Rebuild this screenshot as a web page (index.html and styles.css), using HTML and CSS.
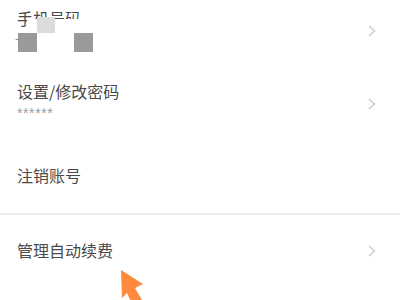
FILE: index.html
```html
<!DOCTYPE html>
<html lang="zh">
<head>
<meta charset="utf-8">
<link rel="stylesheet" href="styles.css">
</head>
<body>
<div class="list">
  <div class="row">
    <div class="text">
      <div class="title">手机号码</div>
      <div class="sub phone">+</div>
    </div>
    <svg class="chev" width="8" height="12" viewBox="0 0 8 12"><polyline points="1,1 6.5,6 1,11" fill="none" stroke="#cfcfcf" stroke-width="1.6"/></svg>
    <div class="mask"></div>
    <div class="sq sq-light"></div>
    <div class="sq sq-dark sq-a"></div>
    <div class="sq sq-dark sq-b"></div>
  </div>
  <div class="row">
    <div class="text">
      <div class="title">设置/修改密码</div>
      <div class="sub">******</div>
    </div>
    <svg class="chev" width="8" height="12" viewBox="0 0 8 12"><polyline points="1,1 6.5,6 1,11" fill="none" stroke="#cfcfcf" stroke-width="1.6"/></svg>
  </div>
  <div class="row">
    <div class="text single">
      <div class="title">注销账号</div>
    </div>
  </div>
  <div class="divider"></div>
  <div class="row last">
    <div class="text single">
      <div class="title">管理自动续费</div>
    </div>
    <svg class="chev" width="8" height="12" viewBox="0 0 8 12"><polyline points="1,1 6.5,6 1,11" fill="none" stroke="#cfcfcf" stroke-width="1.6"/></svg>
  </div>
</div>
<svg class="cursor" width="400" height="300" viewBox="0 0 400 300"><polygon points="121,270 143,284 135,288 143,302 132,304 127,293 122,298" fill="#ff8a3d"/></svg>
</body>
</html>
```
FILE: styles.css
```css
html, body {
  margin: 0;
  padding: 0;
  background: #fff;
  width: 400px;
  height: 300px;
  overflow: hidden;
  font-family: "Noto Sans CJK SC", "Liberation Sans", sans-serif;
}
.list {
  margin-top: -6px;
  display: flex;
  flex-direction: column;
}
.row {
  position: relative;
  height: 73px;
  display: flex;
  align-items: center;
  justify-content: space-between;
  padding: 0 24px 0 17px;
}
.row.last {
  height: 72px;
}
.text {
  display: flex;
  flex-direction: column;
  padding-bottom: 6px;
}
.text.single {
  padding-bottom: 3px;
}
.title {
  font-size: 16px;
  line-height: 20px;
  color: #4a4a4a;
}
.sub {
  margin-top: 5px;
  font-family: "Liberation Sans", sans-serif;
  font-size: 14px;
  line-height: 14px;
  height: 14px;
  letter-spacing: 0.6px;
  color: #9a9a9a;
}
.phone {
  margin-left: -2px;
  font-size: 13px;
  color: #888;
}
.chev {
  display: block;
}
.divider {
  height: 2px;
  background: #eeeeee;
}
.mask {
  position: absolute;
  left: 27px;
  top: 25px;
  width: 56px;
  height: 15px;
  background: #fff;
}
.sq {
  position: absolute;
}
.sq-light {
  left: 37px;
  top: 23px;
  width: 18px;
  height: 16px;
  background: #dcdcdc;
}
.sq-dark {
  top: 39px;
  width: 19px;
  height: 19px;
  background: #9a9a9a;
}
.sq-a { left: 18px; }
.sq-b { left: 74px; }
.cursor {
  position: absolute;
  left: 0;
  top: 0;
}
```
